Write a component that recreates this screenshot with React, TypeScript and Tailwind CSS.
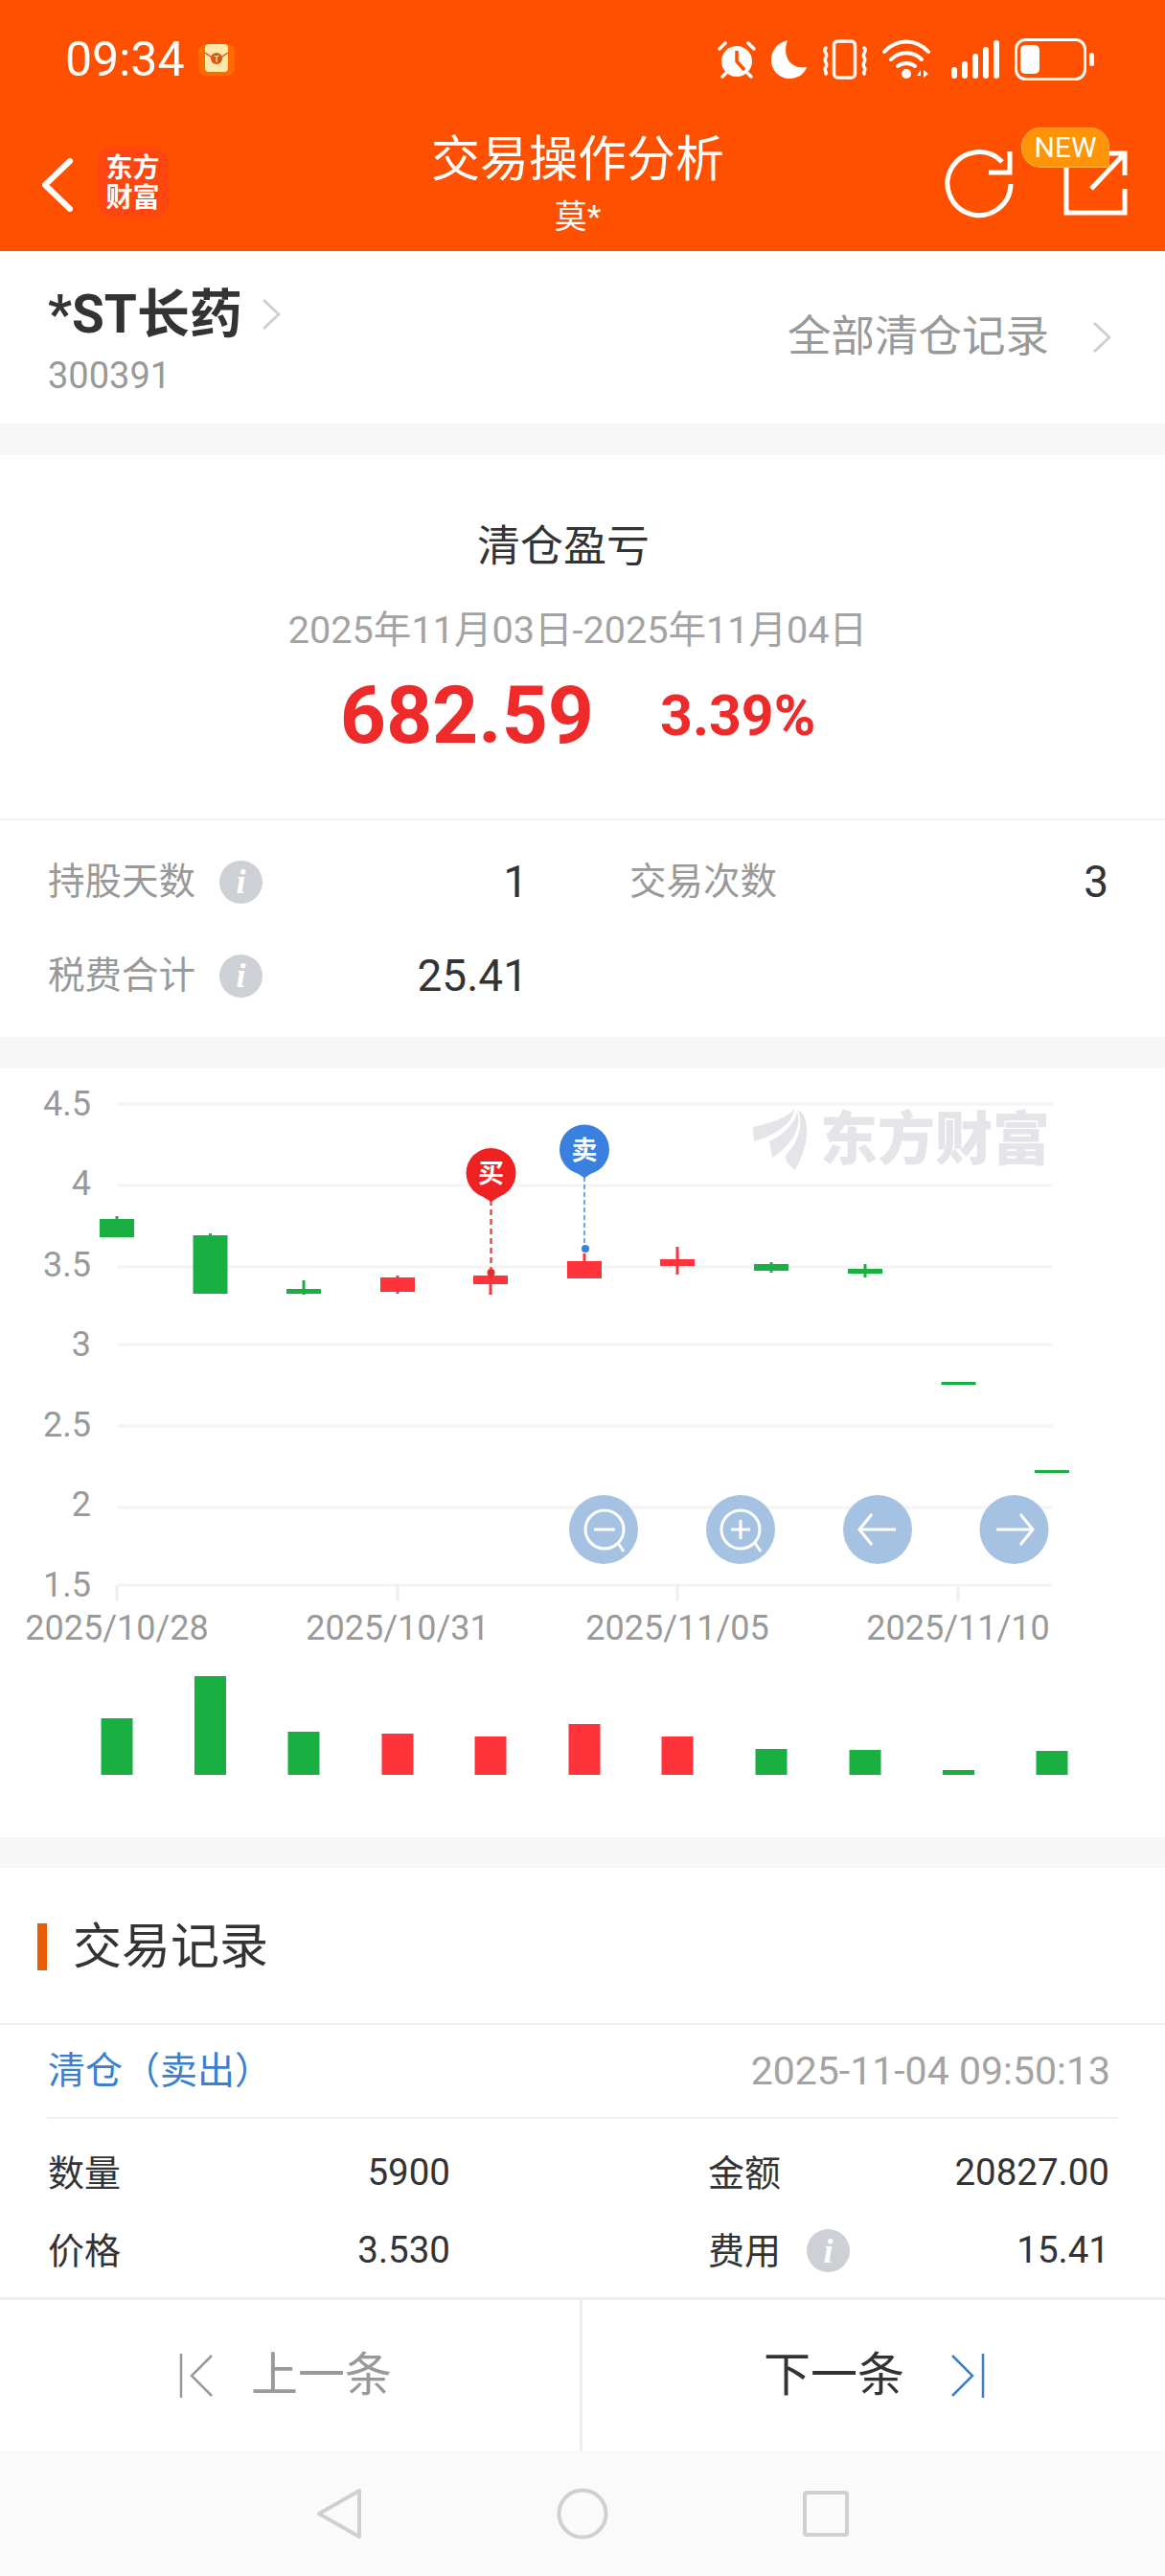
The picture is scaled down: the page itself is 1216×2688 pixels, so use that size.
import React from 'react';

const candles = [
  { x: 122, top: 1272, bottom: 1291, wickTop: 1269, wickBottom: 1291, color: '#1AAF42' },
  { x: 219.5, top: 1289, bottom: 1350, wickTop: 1287, wickBottom: 1350, color: '#1AAF42' },
  { x: 317, top: 1345, bottom: 1350, wickTop: 1336, wickBottom: 1351, color: '#1AAF42' },
  { x: 415, top: 1333, bottom: 1348, wickTop: 1331, wickBottom: 1350, color: '#FF333A' },
  { x: 512, top: 1331, bottom: 1340, wickTop: 1326, wickBottom: 1351, color: '#FF333A' },
  { x: 610, top: 1316, bottom: 1334, wickTop: 1308, wickBottom: 1334, color: '#FF333A' },
  { x: 707, top: 1314, bottom: 1321, wickTop: 1301, wickBottom: 1330, color: '#FF333A' },
  { x: 805, top: 1319, bottom: 1326, wickTop: 1317, wickBottom: 1328, color: '#1AAF42' },
  { x: 903, top: 1324, bottom: 1329, wickTop: 1319, wickBottom: 1333, color: '#1AAF42' },
  { x: 1000.5, top: 1442, bottom: 1445, wickTop: 1442, wickBottom: 1445, color: '#1AAF42' },
  { x: 1098, top: 1534, bottom: 1537, wickTop: 1534, wickBottom: 1537, color: '#1AAF42' },
];

const volumeTops = [1793, 1749, 1807, 1809, 1812, 1799, 1812, 1825, 1826, 1847, 1827];

const gridLines = [1152, 1237, 1322, 1403, 1488, 1573, 1654];

const yLabels = [
  { text: '4.5', y: 1164 },
  { text: '4', y: 1247 },
  { text: '3.5', y: 1332 },
  { text: '3', y: 1415 },
  { text: '2.5', y: 1499 },
  { text: '2', y: 1582 },
  { text: '1.5', y: 1666 },
];

const xLabels = [
  { text: '2025/10/28', x: 122 },
  { text: '2025/10/31', x: 415 },
  { text: '2025/11/05', x: 707 },
  { text: '2025/11/10', x: 1000 },
];

function Info() {
  return (
    <span className="flex h-[45px] w-[45px] items-center justify-center rounded-full bg-[#CDD0D4] font-['Liberation_Serif',serif] text-[36px] font-bold italic leading-none text-white">
      i
    </span>
  );
}

function Chevron({ className }: { className: string }) {
  return (
    <svg viewBox="0 0 20 34" className={className} fill="none" stroke="#CFCFCF" strokeWidth="3">
      <path d="M2 2 L18 17 L2 32" strokeLinejoin="round" />
    </svg>
  );
}

function RedPacket() {
  return (
    <svg width="38" height="33" viewBox="0 0 38 33" className="ml-[14px]">
      <rect width="38" height="33" rx="8" fill="#FF6A00" />
      <rect x="7" y="0" width="24" height="29" rx="4" fill="#FFE9A8" />
      <path d="M7 9 L19 17 L31 9" fill="none" stroke="#D9541A" strokeWidth="1.5" />
      <circle cx="19" cy="15" r="6" fill="#D9541A" />
      <text x="19" y="19" textAnchor="middle" fontSize="9" fontWeight="700" fill="#FFD9A0">T</text>
    </svg>
  );
}

function StatusIcons() {
  return (
    <div className="flex items-center">
      {/* alarm */}
      <svg width="42" height="40" viewBox="0 0 42 40">
        <circle cx="21" cy="22" r="16" fill="#fff" />
        <path d="M21 11 V22 L29 31" fill="none" stroke="#FF5000" strokeWidth="3.5" />
        <path d="M3 9 L9 3 M39 9 L33 3 M6 38 L11 33 M36 38 L31 33" stroke="#fff" strokeWidth="3.5" strokeLinecap="round" />
      </svg>
      {/* moon */}
      <svg width="38" height="40" viewBox="0 0 38 40" className="ml-[15px]">
        <path d="M17 0 C5 3 0 12 0 21 C0 32 9 40 19 40 C28 40 35 35 37 28 C24 31 10 20 17 0 Z" fill="#fff" />
      </svg>
      {/* vibrate */}
      <svg width="48" height="42" viewBox="0 0 48 42" className="ml-[15px]">
        <rect x="12.5" y="2" width="22" height="38" rx="4" fill="none" stroke="#fff" strokeWidth="3.5" />
        <path d="M4 9 C0 12 7 15 4 19 C1 23 7 25 4 29 C1 33 6 34 4 36 M44 9 C48 12 41 15 44 19 C47 23 41 25 44 29 C47 33 42 34 44 36" fill="none" stroke="#fff" strokeWidth="3.5" strokeLinecap="round" />
      </svg>
      {/* wifi */}
      <svg width="50" height="42" viewBox="0 0 50 42" className="ml-[15px]">
        <path d="M2 13 C15 -1 35 -1 48 13 M9 21 C18 12 32 12 41 21 M16 28 C21 24 29 24 34 28" fill="none" stroke="#fff" strokeWidth="4" strokeLinecap="round" />
        <circle cx="25" cy="36" r="5" fill="#fff" />
        <path d="M36 38 L40 32 V38 Z M43 32 L48 36 L43 40 Z" fill="#fff" />
      </svg>
      {/* signal */}
      <svg width="50" height="40" viewBox="0 0 50 40" className="ml-[22px]">
        <rect x="0" y="28" width="6" height="12" rx="3" fill="#fff" />
        <rect x="11" y="22" width="6" height="18" rx="3" fill="#fff" />
        <rect x="22" y="14" width="6" height="26" rx="3" fill="#fff" />
        <rect x="33" y="7" width="6" height="33" rx="3" fill="#fff" />
        <rect x="44" y="0" width="6" height="40" rx="3" fill="#fff" />
      </svg>
      {/* battery */}
      <svg width="83" height="44" viewBox="0 0 83 44" className="ml-[16px]">
        <rect x="1.5" y="1.5" width="72" height="41" rx="10" fill="none" stroke="#fff" strokeWidth="3" />
        <rect x="6" y="7" width="20" height="30" rx="5" fill="#fff" />
        <rect x="78" y="15" width="5" height="14" rx="2.5" fill="#fff" />
      </svg>
    </div>
  );
}

function Header() {
  return (
    <header className="h-[262px] shrink-0 bg-[#FF5000] text-white">
      <div className="flex h-[124px] items-center justify-between pl-[68px] pr-[74px]">
        <div className="flex items-center">
          <span className="text-[50px] leading-none">09:34</span>
          <RedPacket />
        </div>
        <StatusIcons />
      </div>
      <div className="relative grid h-[138px] grid-cols-[1fr_auto_1fr]">
        <div className="flex items-start">
          <svg width="32" height="56" viewBox="0 0 32 56" className="ml-[44px] mt-[41px]" fill="none" stroke="#fff" strokeWidth="6" strokeLinecap="round" strokeLinejoin="round">
            <path d="M29 3 L3 28 L29 53" />
          </svg>
          <div className="ml-[25px] mt-[29px] flex h-[75px] w-[75px] flex-col items-center justify-center rounded-[18px] bg-[#FF4610] text-[28px] font-bold leading-[31px]">
            <span>东方</span>
            <span>财富</span>
          </div>
        </div>
        <div className="flex flex-col items-center pr-[10px] pt-[16px]">
          <span className="text-[51px] leading-[54px]">交易操作分析</span>
          <span className="mt-[14px] text-[34px] leading-[36px]">莫*</span>
        </div>
        <div className="flex items-start justify-end pr-[37px]">
          <svg width="80" height="80" viewBox="985 151 80 80" className="mt-[27px]" fill="none" stroke="#fff" strokeWidth="5">
            <path d="M1056 192 A33 33 0 1 1 1047 169" />
            <path d="M1055 158 V180 H1033" />
          </svg>
          <svg width="72" height="72" viewBox="1108 155 72 72" className="ml-[43px] mt-[31px]" fill="none" stroke="#fff" strokeWidth="5">
            <path d="M1114 170 V222 H1175 V197" />
            <path d="M1140 197 L1175 160 M1150 160 H1175 V183" />
          </svg>
          <span className="absolute right-[58px] top-[9px] flex h-[42px] w-[92px] items-center justify-center rounded-[20px] rounded-br-none border border-[#FFB040] bg-[#FF9408] text-[30px] leading-none">
            NEW
          </span>
        </div>
      </div>
    </header>
  );
}

function StockRow() {
  return (
    <section className="flex h-[180px] shrink-0 justify-between bg-white pl-[50px] pr-[56px]">
      <div>
        <div className="flex items-center pt-[37px]">
          <span className="text-[55px] font-bold leading-[58px] text-[#333]">*ST长药</span>
          <Chevron className="ml-[20px] h-[34px] w-[20px]" />
        </div>
        <div className="mt-[13px] text-[38px] leading-[44px] text-[#999]">300391</div>
      </div>
      <div className="flex items-center">
        <span className="text-[45.5px] leading-none text-[#999]">全部清仓记录</span>
        <Chevron className="ml-[45px] h-[34px] w-[20px]" />
      </div>
    </section>
  );
}

function StatCell({ label, value, info, className }: { label: string; value?: string; info?: boolean; className: string }) {
  return (
    <div className={`flex h-[98px] items-center ${className}`}>
      <span className="text-[38.5px] leading-none text-[#999]">{label}</span>
      {info && <span className="ml-[25px]"><Info /></span>}
      <span className="ml-auto text-[46px] leading-none text-[#333]">{value}</span>
    </div>
  );
}

function Summary() {
  return (
    <section className="h-[607px] shrink-0 bg-white">
      <div className="flex h-[381px] flex-col items-center border-b-2 border-[#F0F0F0]">
        <div className="mr-[40px] mt-[72px] text-[45px] leading-[48px] text-[#333]">清仓盈亏</div>
        <div className="mr-[10px] mt-[40px] text-[39.6px] leading-[46px] text-[#A3A3A3]">2025年11月03日-2025年11月04日</div>
        <div className="mr-[10px] mt-[16px] flex items-center">
          <span className="text-[84px] font-bold leading-[100px] text-[#EE2A2A]">682.59</span>
          <span className="ml-[69px] text-[59px] font-bold leading-[70px] text-[#EE2A2A]">3.39%</span>
        </div>
      </div>
      <div className="grid grid-cols-[608px_608px] pt-[15px]">
        <StatCell label="持股天数" value="1" info className="ml-[50px] mr-[57px]" />
        <StatCell label="交易次数" value="3" className="ml-[49px] mr-[59px]" />
        <StatCell label="税费合计" value="25.41" info className="ml-[50px] mr-[57px]" />
      </div>
    </section>
  );
}

function Chart() {
  return (
    <section className="h-[802px] shrink-0 bg-white">
      <svg width="1216" height="802" viewBox="0 1115 1216 802" className="block">
        {gridLines.map((y) => (
          <line key={y} x1="122" x2="1098" y1={y} y2={y} stroke="#F4F4F4" strokeWidth="3" />
        ))}
        {xLabels.map((t) => (
          <line key={t.x} x1={t.x} x2={t.x} y1="1654" y2="1671" stroke="#EEEEEE" strokeWidth="3" />
        ))}
        {yLabels.map((l) => (
          <text key={l.text} x="95" y={l.y} textAnchor="end" fontSize="36" fill="#999">{l.text}</text>
        ))}
        {xLabels.map((t) => (
          <text key={t.text} x={t.x} y="1711" textAnchor="middle" fontSize="36" fill="#999">{t.text}</text>
        ))}

        {/* watermark */}
        <path d="M786 1176 C805 1172 822 1166 829 1157 C829 1170 812 1184 787 1191 Z M803 1191 C818 1184 830 1172 832 1160 C838 1175 826 1196 806 1208 Z M833 1158 C845 1165 847 1190 830 1221 C822 1215 817 1208 822 1203 C835 1190 838 1172 833 1158 Z" fill="#E5E5E9" />
        <text x="856" y="1210" fontSize="60" fontWeight="900" fill="#E5E5E9">东方财富</text>

        {candles.map((c) => (
          <g key={c.x}>
            <line x1={c.x} x2={c.x} y1={c.wickTop} y2={c.wickBottom} stroke={c.color} strokeWidth="3" />
            <rect x={c.x - 18} y={c.top} width="36" height={c.bottom - c.top} fill={c.color} />
          </g>
        ))}

        {/* buy marker */}
        <line x1="512.5" x2="512.5" y1="1252" y2="1326" stroke="#EE4A4A" strokeWidth="2.5" strokeDasharray="6 4" />
        <circle cx="512.5" cy="1328" r="4" fill="#EE2A2A" />
        <circle cx="512.5" cy="1224" r="26" fill="#EE2222" />
        <path d="M492 1240 Q505 1250 512.5 1254 Q520 1250 533 1240 Z" fill="#EE2222" />
        <text x="512.5" y="1234" textAnchor="middle" fontSize="27" fontWeight="700" fill="#fff">买</text>

        {/* sell marker */}
        <line x1="610" x2="610" y1="1228" y2="1303" stroke="#6FA3E6" strokeWidth="2" strokeDasharray="5 3" />
        <circle cx="611" cy="1303" r="4" fill="#3A80DE" />
        <circle cx="610" cy="1199.5" r="26" fill="#3A80DE" />
        <path d="M590 1215 Q603 1225 610 1229 Q617 1225 630 1215 Z" fill="#3A80DE" />
        <text x="610" y="1209.5" textAnchor="middle" fontSize="27" fontWeight="700" fill="#fff">卖</text>

        {/* chart buttons */}
        <g fill="#A5C2E2">
          <circle cx="630" cy="1596" r="36" />
          <circle cx="773" cy="1596" r="36" />
          <circle cx="916" cy="1596" r="36" />
          <circle cx="1058.5" cy="1596" r="36" />
        </g>
        <g fill="none" stroke="#fff" strokeWidth="3">
          <circle cx="631" cy="1596" r="20" />
          <path d="M620 1596 H642 M645 1610 L651 1619" />
          <circle cx="773" cy="1596" r="20" />
          <path d="M763 1596 H783 M773 1586 V1606 M788 1610 L794 1619" />
          <path d="M897 1596 H935 M910 1580 L897 1596 L910 1612" />
          <path d="M1040 1596 H1078 M1065 1580 L1078 1596 L1065 1612" />
        </g>

        {volumeTops.map((top, i) => (
          <rect key={i} x={candles[i].x - 16.5} y={top} width="33" height={1852 - top} fill={candles[i].color} />
        ))}
      </svg>
    </section>
  );
}

function RecordCell({ label, value, info, className }: { label: string; value: string; info?: boolean; className: string }) {
  return (
    <div className={`flex h-[81px] items-center ${className}`}>
      <span className="text-[38px] leading-none text-[#333]">{label}</span>
      {info && <span className="ml-[27px]"><Info /></span>}
      <span className="ml-auto text-[38.5px] leading-none text-[#333]">{value}</span>
    </div>
  );
}

function Records() {
  return (
    <section className="h-[448px] shrink-0 bg-white">
      <div className="flex h-[164px] items-center border-b-2 border-[#F0F0F0] pt-[3px]">
        <span className="ml-[39px] h-[49px] w-[10px] bg-[#E85D04]" />
        <span className="ml-[27px] text-[51px] leading-none text-[#333]">交易记录</span>
      </div>
      <div className="ml-[49px] mr-[49px] flex h-[98px] items-center justify-between border-b-2 border-[#F0F0F0] pl-px pr-[8px]">
        <span className="text-[39px] leading-none text-[#3A7FD0]">清仓（卖出）</span>
        <span className="text-[41px] leading-none text-[#A3A3A3]">2025-11-04 09:50:13</span>
      </div>
      <div className="grid grid-cols-[608px_608px] pt-[16px]">
        <RecordCell label="数量" value="5900" className="ml-[50px] mr-[138px]" />
        <RecordCell label="金额" value="20827.00" className="ml-[131px] mr-[58px]" />
        <RecordCell label="价格" value="3.530" className="ml-[50px] mr-[138px]" />
        <RecordCell label="费用" value="15.41" info className="ml-[131px] mr-[58px]" />
      </div>
    </section>
  );
}

function Footer() {
  return (
    <footer className="flex h-[160px] shrink-0 border-t-[3px] border-[#EEEEEE] bg-white">
      <div className="flex w-[608px] items-center border-r-[3px] border-[#EEEEEE] pl-[187px]">
        <svg width="36" height="46" viewBox="0 0 36 46" fill="none" stroke="#999" strokeWidth="2.5">
          <path d="M2 0 V46 M34 2 L13 23 L34 44" />
        </svg>
        <span className="ml-[39px] text-[49px] leading-none text-[#999]">上一条</span>
      </div>
      <div className="flex flex-1 items-center pl-[189px]">
        <span className="text-[49px] leading-none text-[#333]">下一条</span>
        <svg width="36" height="46" viewBox="0 0 36 46" fill="none" stroke="#3A7FC8" strokeWidth="2.5" className="ml-[48px]">
          <path d="M34 0 V46 M2 2 L23 23 L2 44" />
        </svg>
      </div>
    </footer>
  );
}

function NavBar() {
  return (
    <nav className="flex h-[131px] shrink-0 items-center justify-center bg-[#FAFAFA]">
      <svg width="48" height="54" viewBox="0 0 48 54" fill="none" stroke="#D0D0D0" strokeWidth="4" strokeLinejoin="round">
        <path d="M45 3 V51 L3 27 Z" />
      </svg>
      <svg width="54" height="54" viewBox="0 0 54 54" fill="none" stroke="#D0D0D0" strokeWidth="4" className="ml-[203px]">
        <circle cx="27" cy="27" r="24.5" />
      </svg>
      <svg width="48" height="48" viewBox="0 0 48 48" fill="none" stroke="#D0D0D0" strokeWidth="4" className="ml-[203px]">
        <rect x="2" y="2" width="44" height="44" rx="2" />
      </svg>
    </nav>
  );
}

export default function App() {
  return (
    <div className="flex h-[2688px] w-[1216px] flex-col overflow-hidden bg-white font-['Roboto','Noto_Sans_CJK_SC',sans-serif]">
      <Header />
      <StockRow />
      <div className="h-[33px] shrink-0 bg-[#F7F7F7]" />
      <Summary />
      <div className="h-[33px] shrink-0 bg-[#F7F7F7]" />
      <Chart />
      <div className="h-[32px] shrink-0 bg-[#F7F7F7]" />
      <Records />
      <Footer />
      <NavBar />
    </div>
  );
}
